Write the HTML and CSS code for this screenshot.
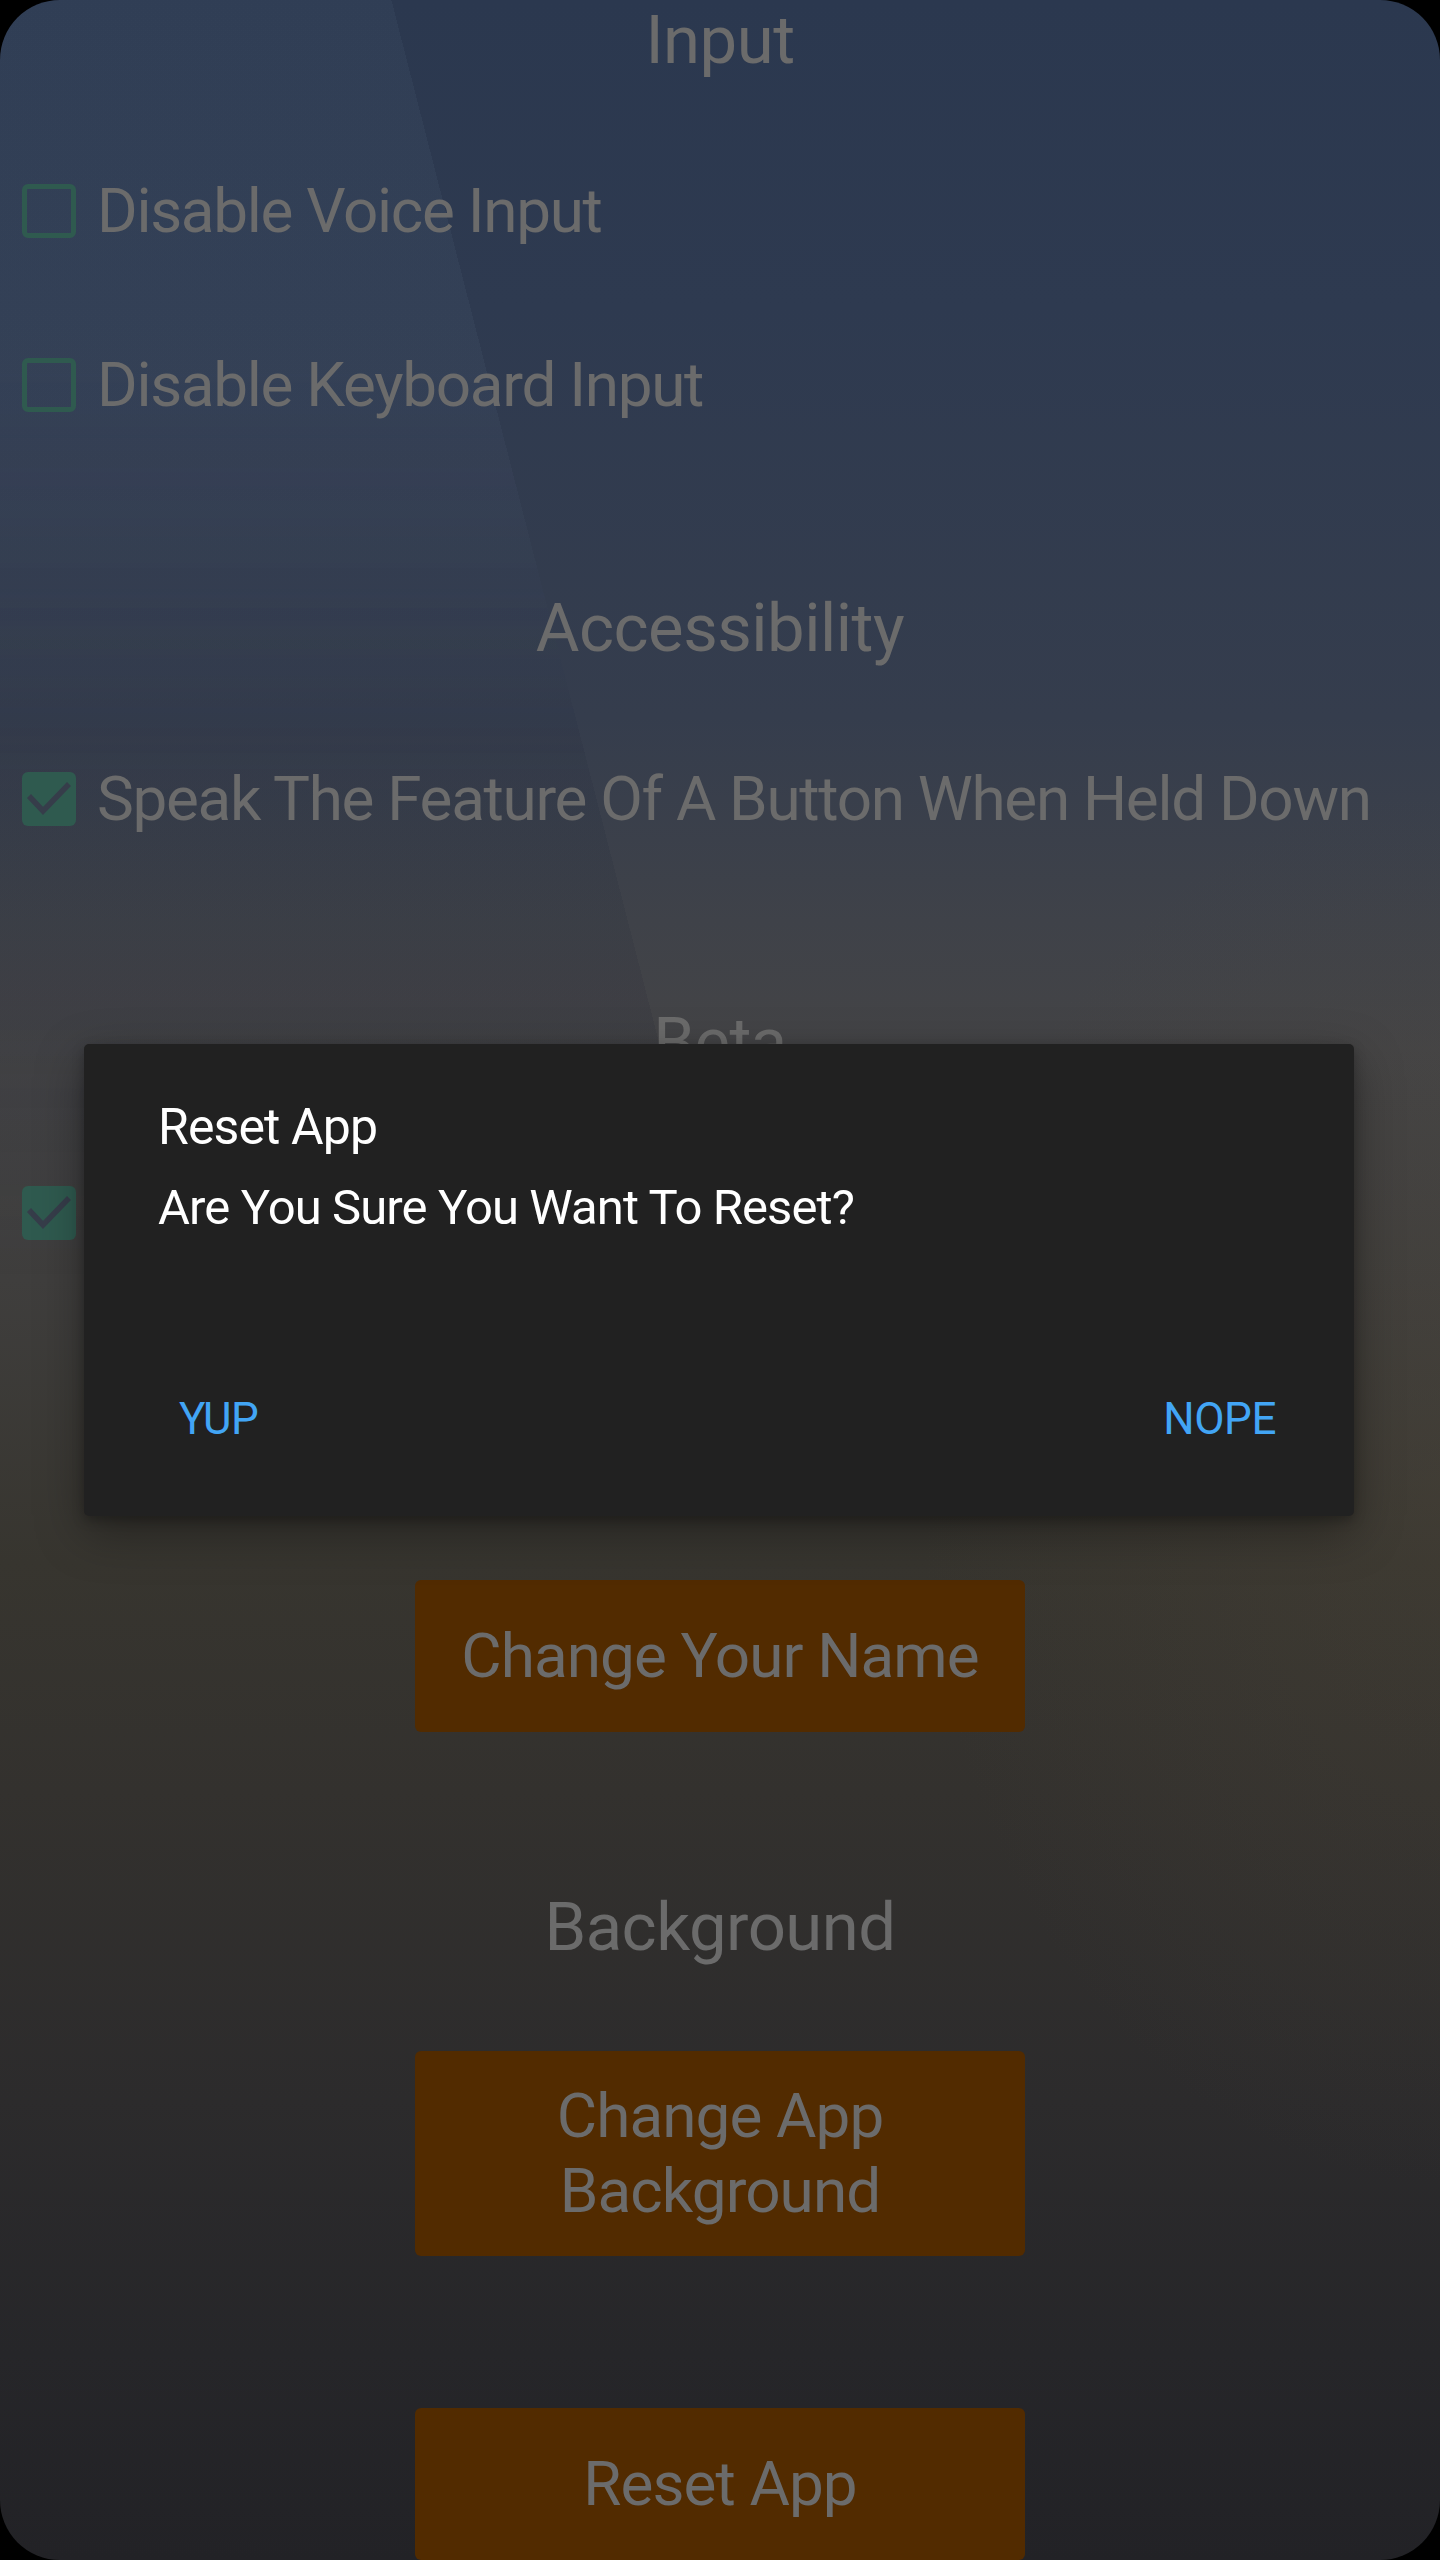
FILE: index.html
```html
<!DOCTYPE html>
<html lang="en">
<head>
<meta charset="utf-8">
<title>Settings</title>
<link rel="stylesheet" href="styles.css">
</head>
<body>
<div class="screen">
  <main class="settings">
    <h2 class="section-title">Input</h2>
    <label class="check-row">
      <span class="box"></span>
      <span class="row-label">Disable Voice Input</span>
    </label>
    <label class="check-row">
      <span class="box"></span>
      <span class="row-label">Disable Keyboard Input</span>
    </label>

    <h2 class="section-title">Accessibility</h2>
    <label class="check-row">
      <span class="box checked"><svg viewBox="0 0 54 54" class="tick"><polyline points="7,24 21,39 47,12"/></svg></span>
      <span class="row-label">Speak The Feature Of A Button When Held Down</span>
    </label>

    <h2 class="section-title">Beta</h2>
    <label class="check-row">
      <span class="box checked"><svg viewBox="0 0 54 54" class="tick"><polyline points="7,24 21,39 47,12"/></svg></span>
    </label>

    <button class="action-btn">Change Your Name</button>

    <h2 class="section-title">Background</h2>
    <button class="action-btn">Change App Background</button>

    <button class="action-btn">Reset App</button>
  </main>

  <div class="dialog" role="dialog">
    <h3 class="dialog-title">Reset App</h3>
    <p class="dialog-message">Are You Sure You Want To Reset?</p>
    <div class="dialog-actions">
      <button class="dialog-btn">YUP</button>
      <button class="dialog-btn">NOPE</button>
    </div>
  </div>
</div>
</body>
</html>
```

FILE: styles.css
```css
* { box-sizing: border-box; }

html, body {
  margin: 0;
  padding: 0;
  background: #000;
}

body {
  font-family: Roboto, "Liberation Sans", sans-serif;
}

.screen {
  position: relative;
  width: 1440px;
  height: 2560px;
  border-radius: 60px;
  overflow: hidden;
  background:
    radial-gradient(ellipse 520px 700px at 100% 58%, rgba(80, 72, 58, 0.3), rgba(0, 0, 0, 0)),
    linear-gradient(180deg,
      #2b384f 0%,
      #2e3a50 12%,
      #353d4d 28%,
      #3f4249 36%,
      #444446 41%,
      #3f3e3d 50%,
      #37352f 61%,
      #33312e 70%,
      #2c2b2c 82%,
      #262629 92%,
      #222226 100%);
}

/* subtle diagonal light facet of the wallpaper */
.screen::before,
.screen::after {
  content: "";
  position: absolute;
  inset: 0;
  pointer-events: none;
}

.screen::before {
  background: linear-gradient(75.6deg, rgba(160, 180, 220, 0.05) 50%, rgba(0, 0, 0, 0) 50%);
  -webkit-mask-image: linear-gradient(180deg, #000 0%, #000 14%, transparent 30%);
  mask-image: linear-gradient(180deg, #000 0%, #000 14%, transparent 30%);
}

.screen::after {
  background: linear-gradient(75.6deg, rgba(20, 26, 46, 0.09) 50%, rgba(0, 0, 0, 0) 50%);
  -webkit-mask-image: linear-gradient(180deg, transparent 22%, #000 31%, #000 40%, transparent 50%);
  mask-image: linear-gradient(180deg, transparent 22%, #000 31%, #000 40%, transparent 50%);
}

.settings {
  position: relative;
  z-index: 1;
  display: flex;
  flex-direction: column;
  align-items: stretch;
}

.section-title {
  margin: 176px 0 0;
  height: 80px;
  line-height: 80px;
  font-size: 67px;
  font-weight: 400;
  letter-spacing: -0.5px;
  color: #6b6b6b;
  text-align: center;
}

.section-title:first-child {
  margin-top: 0;
}

.check-row {
  display: flex;
  align-items: center;
  height: 54px;
  padding-left: 22px;
  gap: 21px;
  margin-top: 104px;
}

.check-row + .check-row {
  margin-top: 120px;
}

.box {
  flex: 0 0 54px;
  width: 54px;
  height: 54px;
  border: 5px solid #2f5a4f;
  border-radius: 6px;
  display: flex;
}

.box.checked {
  border: 0;
  background: #2f5a4f;
}

.tick {
  width: 54px;
  height: 54px;
  fill: none;
  stroke: #363d4a;
  stroke-width: 5.5;
}

.row-label {
  font-size: 62px;
  line-height: 54px;
  letter-spacing: -1.3px;
  color: #6b6b6b;
  white-space: nowrap;
}

.action-btn {
  align-self: center;
  width: 610px;
  min-height: 152px;
  margin-top: 84px;
  padding: 28px 20px;
  border: 0;
  border-radius: 6px;
  background: #522b00;
  color: #6b6b6b;
  font-family: Roboto, "Liberation Sans", sans-serif;
  font-size: 62px;
  line-height: 74.5px;
  letter-spacing: -0.9px;
  text-align: center;
}

.check-row + .action-btn {
  margin-top: 340px;
}

.action-btn + .section-title {
  margin-top: 155px;
}

.action-btn + .action-btn {
  margin-top: 152px;
}

/* Dialog */
.dialog {
  position: absolute;
  z-index: 2;
  left: 84px;
  top: 1044px;
  width: 1270px;
  height: 472px;
  background: #212121;
  border-radius: 5px;
  box-shadow: 0 16px 48px rgba(0, 0, 0, 0.35), 0 4px 12px rgba(0, 0, 0, 0.25);
  padding: 53px 0 0 74px;
  display: flex;
  flex-direction: column;
}

.dialog-title {
  margin: 0;
  font-size: 50px;
  font-weight: 400;
  line-height: 60px;
  letter-spacing: -0.9px;
  color: #ffffff;
}

.dialog-message {
  margin: 21px 0 0;
  font-size: 49px;
  line-height: 60px;
  letter-spacing: -0.9px;
  color: #ffffff;
}

.dialog-actions {
  display: flex;
  justify-content: space-between;
  margin: 151px 0 0 -74px;
  padding: 0 78px 0 95px;
}

.dialog-btn {
  border: 0;
  padding: 0;
  background: none;
  font-family: Roboto, "Liberation Sans", sans-serif;
  font-size: 44px;
  line-height: 60px;
  letter-spacing: -0.4px;
  color: #42a5f5;
}
```
